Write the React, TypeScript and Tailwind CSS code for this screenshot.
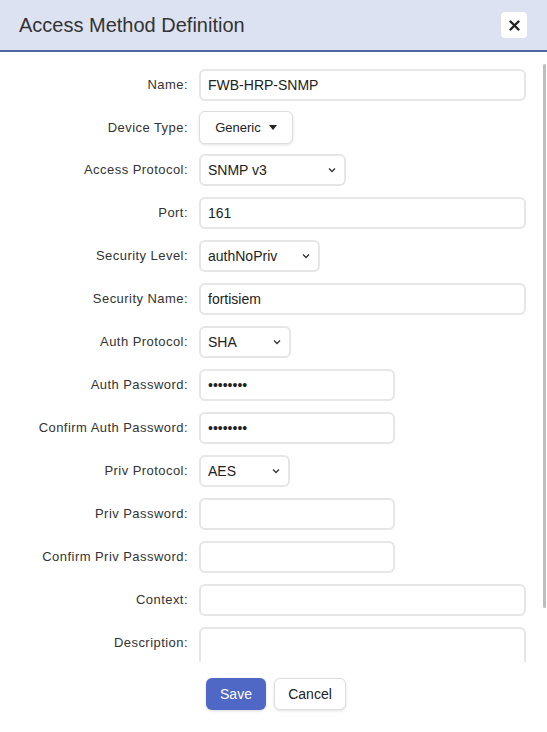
import { ReactNode } from "react";

/* ── 필드 정의 ─────────────────────────────────────────── */
type Field =
  | { label: string; kind: "text"; value?: string; width: string }
  | { label: string; kind: "password"; value?: string; width: string }
  | { label: string; kind: "select"; value: string; width: string }
  | { label: string; kind: "dropdown"; value: string }
  | { label: string; kind: "textarea" };

const FIELDS: Field[] = [
  { label: "Name:", kind: "text", value: "FWB-HRP-SNMP", width: "w-[327px]" },
  { label: "Device Type:", kind: "dropdown", value: "Generic" },
  { label: "Access Protocol:", kind: "select", value: "SNMP v3", width: "w-[147px]" },
  { label: "Port:", kind: "text", value: "161", width: "w-[327px]" },
  { label: "Security Level:", kind: "select", value: "authNoPriv", width: "w-[121px]" },
  { label: "Security Name:", kind: "text", value: "fortisiem", width: "w-[327px]" },
  { label: "Auth Protocol:", kind: "select", value: "SHA", width: "w-[92px]" },
  { label: "Auth Password:", kind: "password", value: "snmpauth", width: "w-[196px]" },
  { label: "Confirm Auth Password:", kind: "password", value: "snmpauth", width: "w-[196px]" },
  { label: "Priv Protocol:", kind: "select", value: "AES", width: "w-[91px]" },
  { label: "Priv Password:", kind: "password", width: "w-[196px]" },
  { label: "Confirm Priv Password:", kind: "password", width: "w-[196px]" },
  { label: "Context:", kind: "text", width: "w-[327px]" },
  { label: "Description:", kind: "textarea" },
];

const BOX = "h-[32px] rounded-[6px] border-2 border-[#e6e6e6] bg-white text-[14px] text-[#222]";

function Chevron() {
  return (
    <svg width="8" height="6" viewBox="0 0 8 6" className="shrink-0">
      <path d="M1 1.5 L4 4.5 L7 1.5" fill="none" stroke="#333" strokeWidth="1.3" />
    </svg>
  );
}

function Control({ f }: { f: Field }) {
  switch (f.kind) {
    case "text":
    case "password":
      return (
        <input
          type={f.kind}
          readOnly
          defaultValue={f.value ?? ""}
          className={`${BOX} ${f.width} px-[7px] outline-none`}
        />
      );
    case "select":
      return (
        <div className={`${BOX} ${f.width} flex items-center justify-between pl-[7px] pr-[8px]`}>
          <span>{f.value}</span>
          <Chevron />
        </div>
      );
    case "dropdown":
      return (
        <div className="-mt-[1px] h-[33px] w-[94px] rounded-[6px] border border-[#ddd] bg-white shadow-[0_1px_3px_rgba(0,0,0,0.12)] flex items-center justify-center gap-[8px] text-[13px] text-[#222]">
          <span>{f.value}</span>
          <svg width="8" height="5" viewBox="0 0 8 5">
            <path d="M0 0 H8 L4 5 Z" fill="#222" />
          </svg>
        </div>
      );
    case "textarea":
      return <div className={`${BOX} w-[327px] h-[62px]`} />;
  }
}

function Row({ label, short, children }: { label: string; short?: boolean; children: ReactNode }) {
  return (
    <div className={`flex items-start ${short ? "h-[31px]" : ""}`}>
      <label
        className={`w-[188px] shrink-0 ${short ? "h-[31px]" : "h-[32px]"} flex items-center justify-end text-[13px] tracking-[0.45px] text-[#333]`}
      >
        {label}
      </label>
      <div className="ml-[11px]">{children}</div>
    </div>
  );
}

export default function App() {
  return (
    <div className="w-[547px] h-[732px] bg-white flex flex-col overflow-hidden font-['Liberation_Sans',Arial,sans-serif]">
      {/* 헤더 */}
      <div className="h-[52px] shrink-0 bg-[#dde2f2] border-b-2 border-[#4c66a6] flex items-center justify-between pl-[19px] pr-[20px]">
        <h2 className="text-[20px] text-[#333] leading-none">Access Method Definition</h2>
        <button className="w-[26px] h-[26px] rounded-[4px] bg-white flex items-center justify-center">
          <svg width="11" height="11" viewBox="0 0 11 11">
            <path d="M1.5 1.5 L9.5 9.5 M9.5 1.5 L1.5 9.5" stroke="#222" strokeWidth="2.4" strokeLinecap="round" />
          </svg>
        </button>
      </div>

      {/* 폼 본문 — 스크롤 영역 */}
      <div className="relative h-[610px] shrink-0 overflow-hidden">
        <div className="pt-[17px] pb-[22px] flex flex-col gap-[11px]">
          {FIELDS.map((f) => (
            <Row key={f.label} label={f.label} short={f.kind === "dropdown"}>
              <Control f={f} />
            </Row>
          ))}
        </div>
        {/* 스크롤바 썸 */}
        <div className="absolute right-[1px] top-[12px] w-[3px] h-[544px] rounded-full bg-[#bdbdbd]" />
      </div>

      {/* 하단 버튼 */}
      <div className="flex justify-center gap-[8px] pt-[16px] pl-[5px]">
        <button className="h-[32px] w-[60px] rounded-[6px] bg-[#4f67c5] text-white text-[14px] shadow-[0_1px_3px_rgba(0,0,0,0.15)]">
          Save
        </button>
        <button className="h-[32px] w-[72px] rounded-[6px] bg-white border border-[#ddd] text-[#222] text-[14px] shadow-[0_1px_3px_rgba(0,0,0,0.12)]">
          Cancel
        </button>
      </div>
    </div>
  );
}
